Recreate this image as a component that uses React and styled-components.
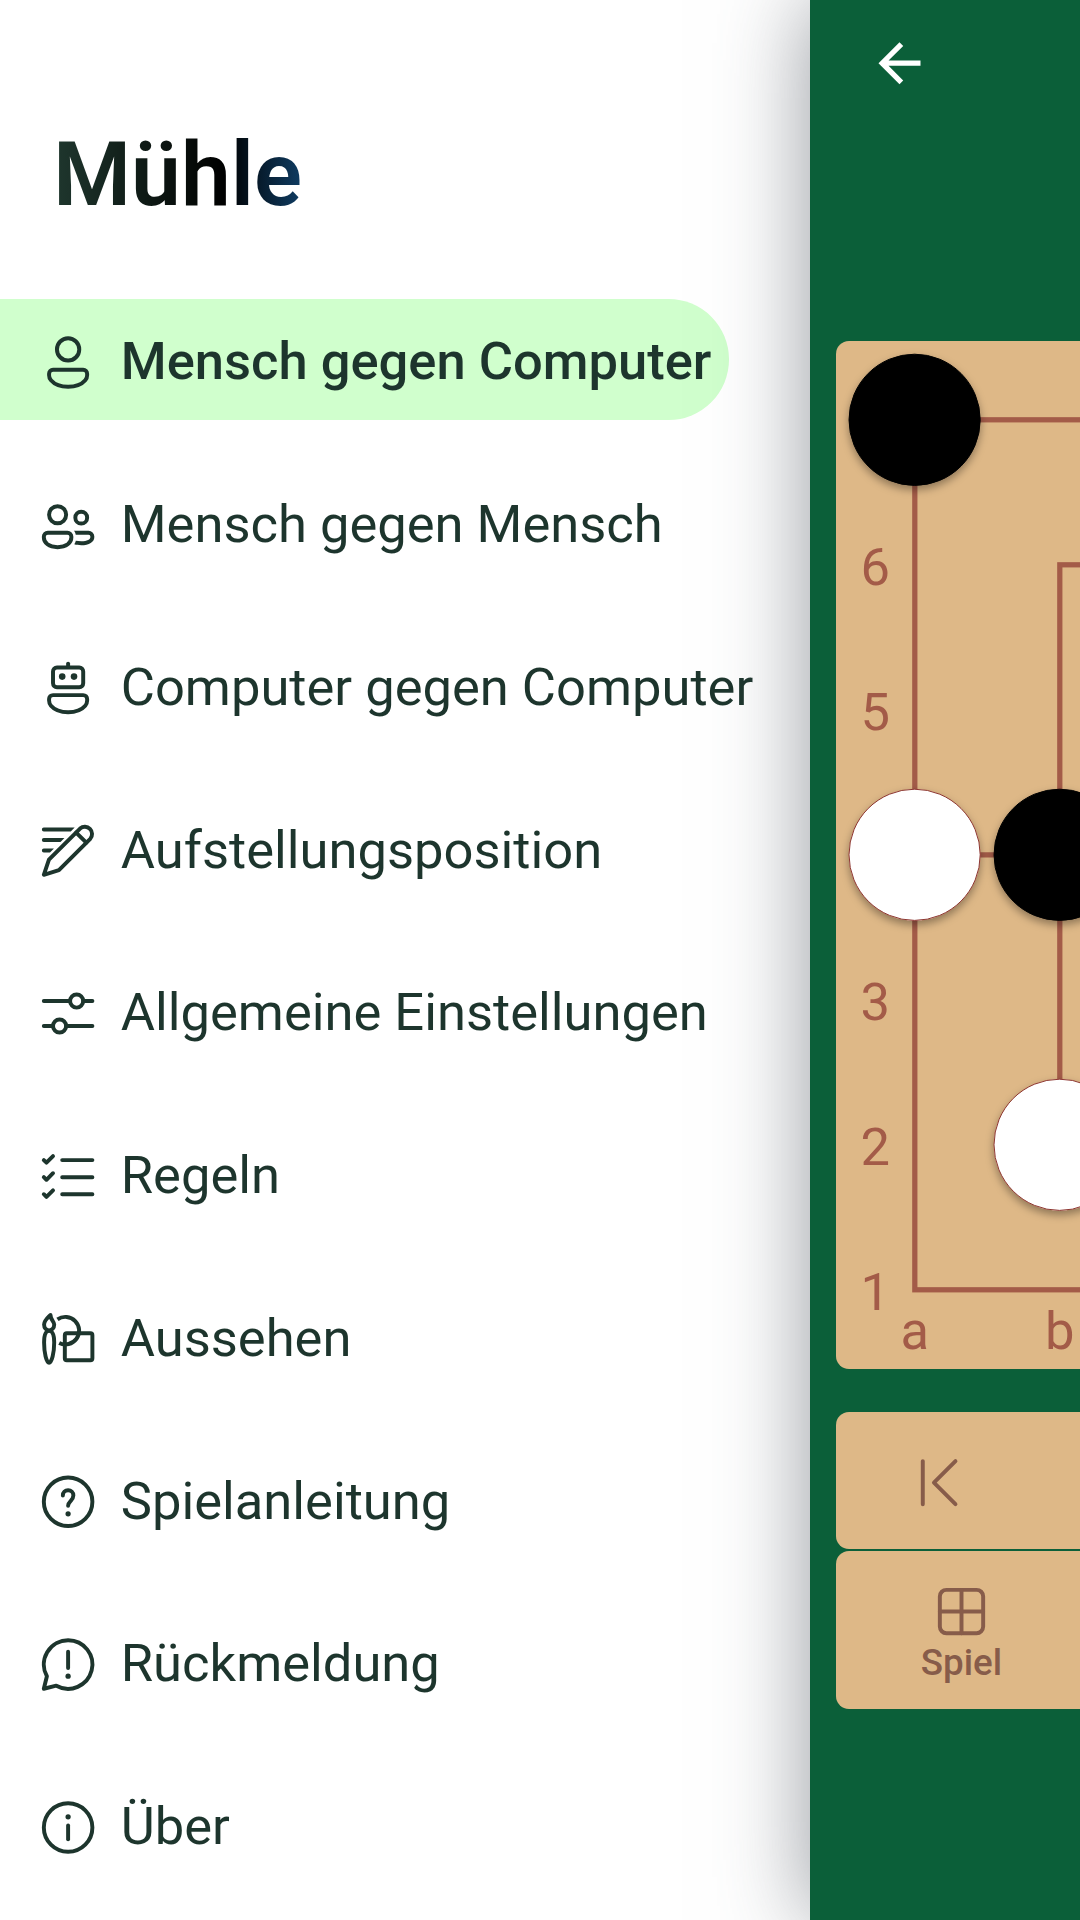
import React from "react";
import styled, { createGlobalStyle } from "styled-components";

const GlobalStyle = createGlobalStyle`
  html, body { margin: 0; padding: 0; }
  body { background: #ffffff; font-family: Roboto, "Liberation Sans", sans-serif; }
`;

const Screen = styled.div`
  display: flex;
  width: 1080px;
  height: 1920px;
  overflow: hidden;
  background: #ffffff;
`;

const Drawer = styled.aside`
  flex: 0 0 810px;
  box-sizing: border-box;
  padding-top: 122px;
`;

const Title = styled.h1`
  display: block;
  width: max-content;
  margin: 0 0 72px 53px;
  font-size: 89.25px;
  line-height: 105px;
  font-weight: 600;
  color: transparent;
  background: linear-gradient(90deg, #1f372e 0px, #000000 172px, #0f3d64 250px);
  background-clip: text;
  -webkit-background-clip: text;
`;

const Menu = styled.nav`
  display: flex;
  flex-direction: column;
  align-items: flex-start;
  gap: 42px;
`;

const MenuItem = styled.a`
  display: flex;
  align-items: center;
  box-sizing: border-box;
  height: 120.75px;
  width: ${(p) => (p.$active ? "729px" : "810px")};
  padding-left: 37px;
  border-radius: 0 60.4px 60.4px 0;
  background: ${(p) => (p.$active ? "#d0ffcd" : "transparent")};
  color: #1d352d;
  font-size: 52.5px;
  font-weight: ${(p) => (p.$active ? 500 : 400)};
  white-space: nowrap;
`;

const MenuIcon = styled.svg`
  flex: none;
  width: 63px;
  height: 63px;
  margin: 6px 20.75px 0 0;
  fill: none;
  stroke: currentColor;
  stroke-width: 1.5;
  stroke-linecap: round;
  stroke-linejoin: round;
`;

const MenuLabel = styled.span`
  line-height: 62px;
  padding-top: 4px;
`;

const Game = styled.main`
  flex: 0 0 1080px;
  box-sizing: border-box;
  height: 1920px;
  padding: 0 26px;
  background: #0b5f39;
  box-shadow: 0 0 86px rgba(82, 89, 98, 0.61);
  position: relative;
`;

const AppBar = styled.header`
  display: flex;
  align-items: center;
  box-sizing: border-box;
  height: 126px;
  padding-left: 32px;
  margin-bottom: 215px;
`;

const BackIcon = styled.svg`
  width: 63px;
  height: 63px;
  fill: #ffffff;
`;

const Board = styled.svg`
  display: block;
  width: 1028px;
  height: 1027.7px;
  border-radius: 13px;
  background: #deb887;
  margin-bottom: 43.3px;
`;

const Coordinate = styled.text`
  fill: #a35b48;
  font-family: Roboto, "Liberation Sans", sans-serif;
  font-size: 52.5px;
  text-anchor: middle;
`;

const Toolbar = styled.div`
  display: flex;
  align-items: center;
  box-sizing: border-box;
  height: ${(p) => p.$height}px;
  padding-left: ${(p) => p.$inset}px;
  padding-top: 3.6px;
  margin-bottom: 2.6px;
  border-radius: 13px;
  background: #deb887;
  color: #875c4a;
`;

const ToolButton = styled.div`
  display: flex;
  flex-direction: column;
  align-items: center;
  width: 126px;
  font-size: 36.75px;
  font-weight: 500;
  line-height: 40px;
`;

const ToolIcon = styled.svg`
  width: 63px;
  height: 63px;
  fill: none;
  stroke: currentColor;
  stroke-width: 1.5;
  stroke-linecap: round;
  stroke-linejoin: round;
`;

const Torso = () => (
  <path d="M6.25 14.75h11.5a1.5 1.5 0 0 1 1.5 1.5v.57a3 3 0 0 1-.72 1.95C17.1 20.43 14.94 21.25 12 21.25s-5.1-.82-6.53-2.48a3 3 0 0 1-.72-1.95v-.57a1.5 1.5 0 0 1 1.5-1.5z" />
);

const Dot = ({ x, y, r = 1 }) => <circle cx={x} cy={y} r={r} fill="currentColor" stroke="none" />;

const icons = {
  person: (
    <>
      <circle cx="12" cy="7" r="4.25" />
      <Torso />
    </>
  ),
  people: (
    <>
      <circle cx="8" cy="7.9" r="3.25" />
      <circle cx="17" cy="9" r="2.25" />
      <path d="M4.25 14.75h7.5a1.5 1.5 0 0 1 1.5 1.5v.25c0 2.1-1.9 3.75-5.25 3.75s-5.25-1.65-5.25-3.75v-.25a1.5 1.5 0 0 1 1.5-1.5z" />
      <path
        d="M14.2 14h5.55A2.25 2.25 0 0 1 22 16.25c0 2.1-2 3.25-5 3.25-1 0-1.9-.1-2.65-.35.3-.4.5-.85.6-1.3.6.1 1.3.15 2.05.15 2.3 0 3.5-.7 3.5-1.75a.75.75 0 0 0-.75-.75h-4.85c-.1-.6-.3-1.1-.7-1.5z"
        fill="currentColor"
        stroke="none"
      />
    </>
  ),
  bot: (
    <>
      <rect x="6.25" y="4.4" width="11.5" height="7.5" rx="1.5" />
      <path d="M12 2.9V4.1" />
      <Dot x={9.75} y={7.85} r={1.25} />
      <Dot x={14.25} y={7.85} r={1.25} />
      <g transform="translate(0 .15)">
        <Torso />
      </g>
    </>
  ),
  setup: (
    <>
      <path d="M16.56 3.66a2.75 2.75 0 0 1 3.88 3.88L8.5 19.5l-5.75 1.75L4.7 15.5z" />
      <path d="M15.06 5.16l3.88 3.88" />
      <path
        d="M2.75 3.25H14.5L13 4.75H2.75a.75.75 0 0 1 0-1.5zM2.75 7.25H10.6l-1.5 1.5H2.75a.75.75 0 0 1 0-1.5zM2.75 11.25H6.6l-1.5 1.5H2.75a.75.75 0 0 1 0-1.5z"
        fill="currentColor"
        stroke="none"
      />
    </>
  ),
  options: (
    <>
      <circle cx="15.25" cy="7.25" r="2.5" />
      <circle cx="8.75" cy="16.75" r="2.5" />
      <path d="M2.75 7.25h10M17.75 7.25h3.5M2.75 16.75h3.5M11.25 16.75h10" />
    </>
  ),
  rules: (
    <>
      <path d="M9.75 5.75h11.5M9.75 12.25h11.5M9.75 18.75h11.5" />
      <path d="M2.75 5.75l1 1 2.5-2.5M2.75 12.25l1 1 2.5-2.5M2.75 18.75l1 1 2.5-2.5" />
    </>
  ),
  look: (
    <>
      <path d="M5.3 3C4.2 4.1 2.85 5.2 2.85 6.7c0 1.3.8 2.2 1.9 2.2s1.95-.9 1.95-2.2C6.7 5.4 5.3 5 5.3 3z" />
      <path d="M4.75 9.1c-1.2 0-1.9 1.5-1.9 4.4 0 4 .9 7.75 1.9 7.75s1.95-3.75 1.95-7.75c0-2.9-.75-4.4-1.95-4.4z" />
      <path d="M7.95 4.7A5.25 5.25 0 1 1 8.6 13.7" strokeLinecap="butt" />
      <rect x="10.75" y="10" width="10.5" height="10.25" rx=".75" />
    </>
  ),
  help: (
    <>
      <circle cx="12" cy="12.1" r="9.25" />
      <path d="M10 9.7a2 2 0 0 1 4 0c0 .95-.4 1.4-1 2.05-.65.65-1 1.1-1 1.9" />
      <Dot x={12} y={16.7} />
    </>
  ),
  feedback: (
    <>
      <path d="M12 2.75a9.25 9.25 0 1 1-4.5 17.33L2.75 21.25l1.17-4.75A9.25 9.25 0 0 1 12 2.75z" />
      <path d="M12 7.1v6.2" />
      <Dot x={12} y={16.45} />
    </>
  ),
  info: (
    <>
      <circle cx="12" cy="12" r="9.25" />
      <path d="M12 11.2v5.3" />
      <Dot x={12} y={7.95} />
    </>
  ),
};

const items = [
  ["person", "Mensch gegen Computer"],
  ["people", "Mensch gegen Mensch"],
  ["bot", "Computer gegen Computer"],
  ["setup", "Aufstellungsposition"],
  ["options", "Allgemeine Einstellungen"],
  ["rules", "Regeln"],
  ["look", "Aussehen"],
  ["help", "Spielanleitung"],
  ["feedback", "Rückmeldung"],
  ["info", "Über"],
];

const STEP = 145;
const ORIGIN = 78.8;
const at = (n) => ORIGIN + n * STEP;

const pieces = [
  { col: 0, row: 0, dark: true },
  { col: 0, row: 3, dark: false },
  { col: 1, row: 3, dark: true },
  { col: 1, row: 5, dark: false },
];

function MillBoard() {
  return (
    <Board viewBox="0 0 1028 1027.7">
      <defs>
        <filter id="lift" x="-20%" y="-20%" width="140%" height="150%">
          <feDropShadow dx="0" dy="4" stdDeviation="4.5" floodColor="#000" floodOpacity="0.36" />
        </filter>
      </defs>
      <g fill="none" stroke="#a35b48" strokeWidth="5.25">
        {[0, 1, 2].map((n) => (
          <rect key={n} x={at(n)} y={at(n)} width={STEP * (6 - 2 * n)} height={STEP * (6 - 2 * n)} />
        ))}
        <path
          d={`M${at(0)} ${at(3)}H${at(2)}M${at(4)} ${at(3)}H${at(6)}M${at(3)} ${at(0)}V${at(2)}M${at(3)} ${at(4)}V${at(6)}`}
        />
      </g>
      {[1, 2, 3, 4, 5, 6].map((row) => (
        <Coordinate key={row} x="39.2" y={at(row) + 20.5}>
          {7 - row}
        </Coordinate>
      ))}
      {["a", "b"].map((name, col) => (
        <Coordinate key={name} x={at(col)} y="1008">
          {name}
        </Coordinate>
      ))}
      {pieces.map(({ col, row, dark }) => (
        <circle
          key={`${col}-${row}`}
          cx={at(col) - 0.2}
          cy={at(row)}
          r="65.6"
          fill={dark ? "#000" : "#fff"}
          stroke={dark ? "#000" : "#8d3530"}
          strokeWidth="1"
          filter="url(#lift)"
        />
      ))}
    </Board>
  );
}

export default function App() {
  return (
    <Screen>
      <GlobalStyle />
      <Drawer>
        <Title>Mühle</Title>
        <Menu>
          {items.map(([icon, label], i) => (
            <MenuItem key={icon} $active={i === 0}>
              <MenuIcon viewBox="0.15 0 24 24">{icons[icon]}</MenuIcon>
              <MenuLabel>{label}</MenuLabel>
            </MenuItem>
          ))}
        </Menu>
      </Drawer>
      <Game>
        <AppBar>
          <BackIcon viewBox="0 0.1 24 24">
            <path d="M20 11H7.83l5.59-5.59L12 4l-8 8 8 8 1.41-1.41L7.83 13H20z" />
          </BackIcon>
        </AppBar>
        <MillBoard />
        <Toolbar $height={136.7} $inset={41}>
          <ToolButton>
            <ToolIcon viewBox="0 0 24 24">
              <path d="M5.25 3.85v16.4M17.7 3.85L9.5 12.05l8.2 8.2" />
            </ToolIcon>
          </ToolButton>
        </Toolbar>
        <Toolbar $height={157.4} $inset={62.5}>
          <ToolButton>
            <ToolIcon viewBox="0 0 24 24">
              <rect x="3.75" y="3.75" width="16.5" height="16.5" rx="2.5" />
              <path d="M12 3.75v16.5M3.75 12h16.5" />
            </ToolIcon>
            Spiel
          </ToolButton>
        </Toolbar>
      </Game>
    </Screen>
  );
}
